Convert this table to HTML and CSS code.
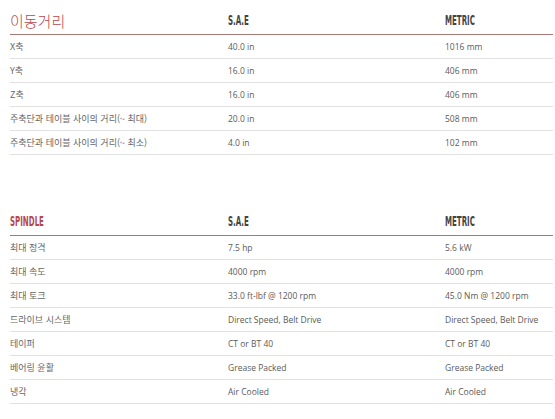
FILE: index.html
```html
<!DOCTYPE html>
<html lang="ko">
<head>
<meta charset="utf-8">
<link rel="stylesheet" href="styles.css">
</head>
<body>
<section class="spec">
  <div class="head">
    <div class="cell title">이동거리</div>
    <div class="cell"><span class="cond">S.A.E</span></div>
    <div class="cell"><span class="cond">METRIC</span></div>
  </div>
  <div class="row"><div class="cell ko">X축</div><div class="cell">40.0 in</div><div class="cell">1016 mm</div></div>
  <div class="row"><div class="cell ko">Y축</div><div class="cell">16.0 in</div><div class="cell">406 mm</div></div>
  <div class="row"><div class="cell ko">Z축</div><div class="cell">16.0 in</div><div class="cell">406 mm</div></div>
  <div class="row"><div class="cell ko">주축단과 테이블 사이의 거리(~ 최대)</div><div class="cell">20.0 in</div><div class="cell">508 mm</div></div>
  <div class="row"><div class="cell ko">주축단과 테이블 사이의 거리(~ 최소)</div><div class="cell">4.0 in</div><div class="cell">102 mm</div></div>
</section>

<section class="spec spec-second">
  <div class="head">
    <div class="cell"><span class="cond red">SPINDLE</span></div>
    <div class="cell"><span class="cond">S.A.E</span></div>
    <div class="cell"><span class="cond">METRIC</span></div>
  </div>
  <div class="row"><div class="cell ko">최대 정격</div><div class="cell">7.5 hp</div><div class="cell">5.6 kW</div></div>
  <div class="row"><div class="cell ko">최대 속도</div><div class="cell">4000 rpm</div><div class="cell">4000 rpm</div></div>
  <div class="row"><div class="cell ko">최대 토크</div><div class="cell">33.0 ft-lbf @ 1200 rpm</div><div class="cell">45.0 Nm @ 1200 rpm</div></div>
  <div class="row"><div class="cell ko">드라이브 시스템</div><div class="cell">Direct Speed, Belt Drive</div><div class="cell">Direct Speed, Belt Drive</div></div>
  <div class="row"><div class="cell ko">테이퍼</div><div class="cell">CT or BT 40</div><div class="cell">CT or BT 40</div></div>
  <div class="row"><div class="cell ko">베어링 윤활</div><div class="cell">Grease Packed</div><div class="cell">Grease Packed</div></div>
  <div class="row"><div class="cell ko">냉각</div><div class="cell">Air Cooled</div><div class="cell">Air Cooled</div></div>
</section>
</body>
</html>
```

FILE: styles.css
```css
html, body {
  margin: 0;
  padding: 0;
  background: #ffffff;
}

body {
  padding: 0 2px 0 10px;
  font-family: "Open Sans", "Noto Sans CJK KR", sans-serif;
  font-size: 8.5px;
  color: #5a5a5a;
}

.spec {
  width: 543px;
}

.spec-second {
  margin-top: 46px;
}

.head,
.row {
  display: grid;
  grid-template-columns: 218px 217px 1fr;
}

.head {
  height: 34px;
  border-bottom: 1px solid #a57a74;
}

.head .cell {
  display: flex;
  align-items: center;
  padding-top: 6px;
}

.row {
  height: 23px;
  border-bottom: 1px solid #e2e2e2;
}

.row .cell {
  display: flex;
  align-items: center;
  white-space: nowrap;
}

.ko {
  font-family: "Noto Sans CJK KR", sans-serif;
  font-size: 9px;
  color: #666666;
}

.title {
  font-family: "Noto Sans CJK KR", sans-serif;
  font-size: 15px;
  font-weight: 300;
  color: #b8474b;
  padding-top: 4px;
}

.cond {
  display: inline-block;
  font-family: "Liberation Sans Narrow", "DejaVu Sans Condensed", sans-serif;
  font-size: 14px;
  font-weight: bold;
  color: #444444;
  transform: scaleX(0.56);
  transform-origin: left center;
}

.red {
  color: #b7474d;
}
```
